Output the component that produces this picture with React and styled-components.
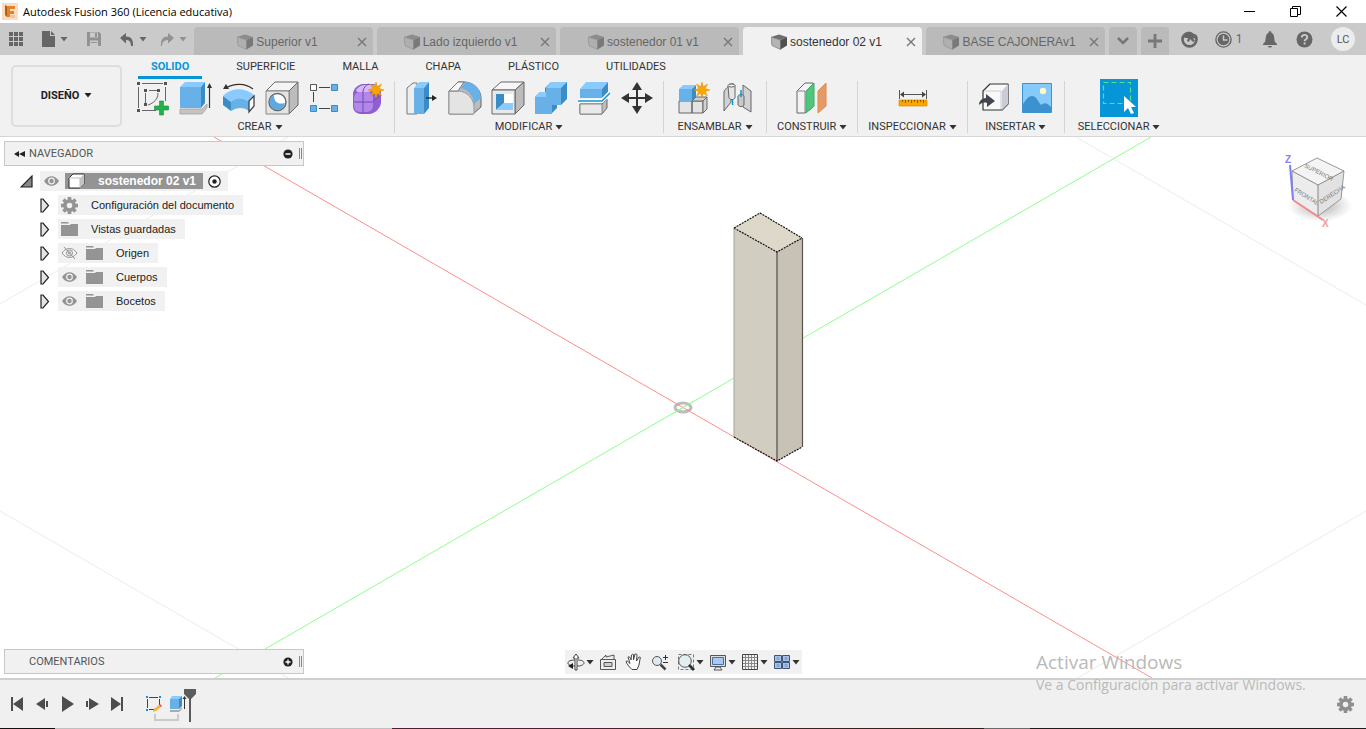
import React from "react";
import styled, {createGlobalStyle} from "styled-components";

const uiFont = `Roboto, "Liberation Sans", Arial, sans-serif`;
const labelFont = `"Liberation Sans", Arial, sans-serif`;
const systemFont = `"Open Sans", "Noto Sans", sans-serif`;

const panelColor = "#f1f1f1";
const barColor = "#cacaca";
const accent = "#0696d7";
const iconGrey = "#666666";

const GlobalStyle = createGlobalStyle`
  *, *::before, *::after { box-sizing: border-box; }
  body { margin: 0; background: white; font-family: ${uiFont}; font-size: 11px; color: #222; }
  button { border: 0; padding: 0; margin: 0; background: none; font: inherit; color: inherit; cursor: pointer; }
  ul { list-style: none; margin: 0; padding: 0; }
  svg { display: block; flex: none; }
`;

const Page = styled.div`
  display: flex;
  flex-direction: column;
  min-height: 100vh;
  position: relative;
  overflow: hidden;
`;

/* ---- title bar ---- */

const TitleBar = styled.header`
  display: flex;
  align-items: center;
  height: 23px;
  padding: 0 2px 0 2px;
  background: white;
  color: black;
`;

const WindowTitle = styled.h1`
  flex: 1;
  margin: 0 0 0 5px;
  font-family: ${systemFont};
  font-size: 11px;
  line-height: 20px;
  font-weight: normal;
`;

const WindowButton = styled.button`
  display: flex;
  align-items: center;
  justify-content: center;
  width: 46px;
  height: 20px;
`;

/* ---- quick access bar and document tabs ---- */

const QuickBar = styled.div`
  display: flex;
  height: 32px;
  background: ${barColor};
`;

const QuickTools = styled.div`
  display: grid;
  grid-template-columns: 32px 46px 33px 40px 35px;
  align-items: center;
  padding-left: 8px;
  color: ${iconGrey};
`;

const QuickButton = styled.button`
  display: flex;
  align-items: center;
  gap: 4px;
  opacity: ${props => props.$dim ? 0.55 : 1};
`;

const DocTabs = styled.div`
  display: flex;
  flex: 1;
  gap: 4px;
  padding-top: 4px;
  min-width: 0;
`;

const DocTab = styled.div`
  display: flex;
  flex: 1 1 0;
  align-items: center;
  min-width: 0;
  padding: 2px 5px 0;
  border-radius: 4px 4px 0 0;
  background: ${props => props.$active ? panelColor : "#bababa"};
  color: ${props => props.$active ? "#333" : "#666"};
  font-family: ${labelFont};
  font-size: 12px;
`;

const DocTabLabel = styled.button`
  display: flex;
  flex: 1;
  align-items: center;
  justify-content: center;
  gap: 3px;
  white-space: nowrap;
`;

const DocTabClose = styled.button`
  display: flex;
  justify-content: center;
  width: 12px;
  color: #777;
`;

const TabAction = styled.button`
  display: flex;
  align-items: center;
  justify-content: center;
  width: 28px;
  border-radius: 4px 4px 0 0;
  background: #bababa;
  color: #777;
`;

const AccountTools = styled.div`
  display: grid;
  grid-template-columns: 32px 47px 36px 32px 46px;
  align-items: center;
  justify-items: center;
  margin-left: 4px;
  color: ${iconGrey};
  font-size: 12px;
`;

const Avatar = styled.button`
  width: 24px;
  height: 24px;
  border-radius: 50%;
  background: #ececec;
  color: #555;
  font-size: 11px;
`;

/* ---- ribbon ---- */

const Ribbon = styled.div`
  display: flex;
  height: 82px;
  background: ${panelColor};
  border-bottom: 1px solid #d6d6d6;
`;

const Workspace = styled.button`
  display: flex;
  align-items: center;
  justify-content: center;
  gap: 5px;
  width: 111px;
  height: 62px;
  margin: 10px 4px 0 11px;
  padding-bottom: 2px;
  border: 2px solid #dedede;
  border-radius: 5px;
  font-weight: bold;
`;

const RibbonTabs = styled.div`
  display: flex;
  gap: 21px;
  height: 24px;
  padding-left: 12px;
`;

const RibbonTab = styled.button`
  height: 24px;
  padding: 2px 13px 0;
  line-height: 19px;
  color: ${props => props.$active ? accent : "#333"};
  font-weight: ${props => props.$active ? "bold" : "normal"};
  border-bottom: 3px solid ${props => props.$active ? accent : "transparent"};
`;

const RibbonGroups = styled.div`
  display: flex;
`;

const Group = styled.section`
  display: flex;
  flex-direction: column;
  align-items: center;
  padding: 0 ${props => props.$roomy ? 8 : 5}px;
`;

const GroupIcons = styled.div`
  display: flex;
`;

const IconCell = styled.button`
  display: flex;
  align-items: center;
  justify-content: center;
  width: 43px;
  height: 38px;
`;

const GroupLabel = styled.button`
  display: flex;
  align-items: center;
  gap: 3px;
  padding: 0 5px;
  line-height: 20px;
  color: #333;
`;

const Divider = styled.div`
  width: 1px;
  height: 52px;
  margin-top: 2px;
  background: #d4d4d4;
`;

/* ---- canvas ---- */

const Canvas = styled.main`
  display: flex;
  flex: 1;
  flex-direction: column;
  justify-content: space-between;
  position: relative;
  padding: 4px;
`;

const SceneSvg = styled.svg`
  position: absolute;
  inset: 0;
  width: 100%;
  height: 100%;
`;

const CanvasTop = styled.div`
  display: flex;
  justify-content: space-between;
  align-items: flex-start;
  position: relative;
`;

const CubeSvg = styled.svg`
  margin: 9px 6px 0 0;
`;

const Browser = styled.aside`
  width: 300px;
`;

const PanelHead = styled.div`
  display: flex;
  align-items: center;
  width: 300px;
  height: 25px;
  padding: 0 1px 0 9px;
  border: 1px solid #c8c8c8;
  background: ${panelColor};
  color: #555;
`;

const PanelName = styled.span`
  flex: 1;
  padding-left: ${props => props.$indent}px;
`;

const PanelToggle = styled.button`
  margin-right: 6px;
`;

const Grip = styled.span`
  width: 3px;
  height: 11px;
  border: solid #888;
  border-width: 0 1px;
`;

const Tree = styled.ul`
  padding-top: 3px;
  font-family: ${labelFont};
`;

const TreeRow = styled.li`
  display: flex;
  align-items: center;
  height: 24px;
  padding-left: ${props => props.$root ? 16 : 34}px;
`;

const Expander = styled.button`
  display: flex;
  width: 20px;
`;

const NodeChip = styled.div`
  display: flex;
  align-items: center;
  height: 20px;
  padding: 0 9px 0 3px;
  gap: 8px;
  background: ${panelColor};
`;

const NodeName = styled.span`
  padding-left: 5px;
  white-space: nowrap;
`;

const RootChip = styled(NodeChip)`
  gap: 5px;
  padding-right: 7px;
`;

const RootName = styled.span`
  display: flex;
  align-items: center;
  gap: 13px;
  height: 16px;
  padding: 0 7px 0 3px;
  background: #949494;
  color: white;
  font-weight: bold;
  font-size: 12px;
  white-space: nowrap;
`;

const CanvasFooter = styled.div`
  display: grid;
  grid-template-columns: 1fr auto 1fr;
  align-items: center;
  position: relative;
`;

const ViewTools = styled.div`
  display: flex;
  align-items: center;
  gap: 5px;
  height: 24px;
  padding: 0 2px;
  background: ${panelColor};
  color: #333;
`;

const ViewTool = styled.button`
  display: flex;
  align-items: center;
  gap: 1px;
  padding-right: ${props => props.$menu ? 0 : 3}px;
`;

/* ---- timeline ---- */

const Timeline = styled.footer`
  display: flex;
  align-items: center;
  height: 50px;
  padding: 0 12px 0 4px;
  border-top: 2px solid #cfcfcf;
  background: #f0f0f0;
  color: #4d4d4d;
`;

const PlayButton = styled.button`
  display: flex;
  align-items: center;
  justify-content: center;
  width: 25px;
  height: 24px;
`;

const Track = styled.div`
  display: flex;
  flex: 1;
  gap: 4px;
  position: relative;
  margin-left: 15px;
`;

const Feature = styled.button`
  width: 20px;
  height: 20px;
`;

const Bracket = styled.span`
  position: absolute;
  left: 10px;
  top: 20px;
  width: 25px;
  height: 7px;
  border: 2px solid #cacaca;
  border-top: 0;
`;

const Marker = styled.svg`
  position: absolute;
  left: 40px;
  top: -5px;
`;

const DesktopEdge = styled.div`
  height: 1px;
  background: linear-gradient(to right, #111 0 4%, #c0c0c0 4% 28.7%, #4a1f33 28.7%, #4a1f33 45%, #3a2a1e 52%, #2a2020 72%, #6a6a6a 72% 75.4%, #1c1c1c 75.4%);
`;

const Watermark = styled.div`
  position: absolute;
  right: 55px;
  bottom: 33px;
  width: 275px;
  color: #b9b9b9;
  font-family: ${systemFont};
  font-size: 14px;
  line-height: 22px;
  white-space: nowrap;
  pointer-events: none;
`;

const WatermarkTitle = styled.div`
  font-size: 19px;
  line-height: 24px;
`;

/* ---- small icons ---- */

const Caret = () => <svg width="8" height="6" viewBox="0 0 8 6"><path d="M.5 1h7L4 5.500z" fill="currentColor"/></svg>;

const CloseIcon = () => (
  <svg width="10" height="10" viewBox="0 0 10 10"><path d="M1 1l8 8M9 1l-8 8" stroke="currentColor" strokeWidth="1.4"/></svg>
);

const DocCube = ({active}) => (
  <svg width="16" height="16" viewBox="0 0 16 16" opacity={active ? 1 : 0.6}>
    <path d="M0 3l8-2.500L16 3 9.500 6z" fill="#6e6e6e"/>
    <path d="M0 3l9.500 3v9.500L1 11.500z" fill={active ? "#b4b4b4" : "#a8a8a8"} stroke="#777" strokeWidth=".7"/>
    <path d="M16 3L9.500 6v9.500l6.500-4z" fill="#4f4f4f"/>
  </svg>
);

const FusionLogo = () => (
  <svg width="16" height="17" viewBox="0 0 16 17">
    <rect width="16" height="17" fill="#fbdcc0"/>
    <path d="M5 3h8v3H8v2h4v3H8v3H5z" fill="#e0842f"/>
    <path d="M3 2l2 1v11l-2-2z" fill="#b5600f"/>
    <path d="M8 12h5v3H9z" fill="#f3c298"/>
  </svg>
);

const quickIcons = {
  grid: <g fill="currentColor">{[1, 6, 11].map(y => [1, 6, 11].map(x => <rect key={x + "-" + y} x={x} y={y} width="4" height="4"/>))}</g>,
  file: <path d="M2 0h8v5h5v11H2zM11 0l4 4h-4z" fill="currentColor"/>,
  save: <g><path d="M1 1h12l2 2v12H1z" fill="currentColor"/><path d="M4 1.500h8v5H4zM4 9.500h8V15H4z" fill={barColor}/><path d="M9 2h2v4H9zM5 11h6v1H5z" fill="currentColor"/></g>,
  undo: <path d="M1 7l6-5v3.500c5 0 7.500 3 7 9.500h-2c0-4-1.500-6-5-6v3.500z" fill="currentColor"/>,
  redo: <path d="M15 7L9 2v3.500c-5 0-7.500 3-7 9.500h1c0-4 2.500-6 6-6v3.500z" fill="currentColor"/>,
};

const QuickIcon = ({name}) => <svg width="16" height="16" viewBox="0 0 16 16">{quickIcons[name]}</svg>;

const gearTeeth = [0, 45, 90, 135, 180, 225, 270, 315];

const GearIcon = ({size = 16, color = "#949494"}) => (
  <svg width={size} height={size} viewBox="0 0 16 16">
    <circle cx="8" cy="8" r="4.300" fill="none" stroke={color} strokeWidth="3.400"/>
    {gearTeeth.map(a => <rect key={a} x="6.300" y="0" width="3.400" height="4" fill={color} transform={`rotate(${a} 8 8)`}/>)}
  </svg>
);

const FolderIcon = () => (
  <svg width="17" height="14" viewBox="0 0 17 14"><path d="M0 0h7l1 1.500H0zM0 3h9l1-1h7v12H0z" fill="#949494"/></svg>
);

const EyeIcon = ({off}) => (
  <svg width="17" height="14" viewBox="0 0 17 14">
    {off ? (
      <g fill="none" stroke="#949494">
        <path d="M1 7c4-6 11-6 15 0-4 6-11 6-15 0z"/><circle cx="8.500" cy="7" r="3"/><circle cx="8.500" cy="7" r="1"/><path d="M3 1l11 12"/>
      </g>
    ) : (
      <g>
        <path d="M1 7c4-6.500 11-6.500 15 0-4 6.500-11 6.500-15 0z" fill="#949494"/>
        <circle cx="8.500" cy="7" r="3.400" fill={panelColor}/><circle cx="8.500" cy="7" r="2.200" fill="#949494"/>
      </g>
    )}
  </svg>
);

/* ---- ribbon icons, all on a 34px grid ---- */

const starPath = "M25 1l1.300 4.800L30.500 3l-2.300 4.500L33 9l-4.800 1.500 2.300 4.500-4.200-2.800L25 17l-1.300-4.800L19.500 15l2.300-4.500L17 9l4.800-1.500L19.500 3l4.200 2.800z";

const ribbonIcons = {
  sketch: (
    <g fill="none" stroke="#666">
      <path d="M2.500 6v21M6 2.500h21M29.500 6v14M6 29.500h14" />
      <path d="M9.500 12v10M13 9.500h8M22 12c0 6-4 10-10 12"/>
      <path d="M1 1h3v3H1zM28 1h3v3h-3zM1 28h3v3H1zM8 8h3v3H8zM21 8h3v3h-3zM8 22h3v3H8z" fill="#555" stroke="none"/>
      <path d="M23.500 20h4v5h5v4h-5v5h-4v-5h-5v-4h5z" fill="#23b14d" stroke="#179239" strokeWidth=".6"/>
    </g>
  ),
  extrude: (
    <g>
      <path d="M1 28h22l5-5v4l-5 6H1z" fill="#c4c4c4" stroke="#999" strokeWidth=".7"/>
      <path d="M1 6h21v21H1z" fill="#67b1e8"/><path d="M1 6l5-5h20l-4 5z" fill="#8acbff"/><path d="M22 6l4-5v21l-4 5z" fill="#3a8cc6"/>
      <path d="M30.500 27V5" stroke="#333" strokeWidth="1.200"/><path d="M28 7l2.500-5L33 7z" fill="#333"/>
    </g>
  ),
  revolve: (
    <g>
      <path d="M1 15c8-9 23-9 32 0l-6 6c-6-5-13-5-18 0z" fill="#8acbff"/>
      <path d="M9 21c5-5 12-5 18 0v9c-5-4-12-4-18 0z" fill="#67b1e8"/>
      <path d="M1 15l8 6v9l-8-6z" fill="#3a8cc6"/>
      <path d="M27 20l5-5v10l-5 6z" fill="white" stroke="#444" strokeWidth="1.300"/>
      <path d="M4 7c8-5 19-5 27 1" fill="none" stroke="#333" strokeWidth="1.200"/><path d="M1 8l3-5 3 5z" fill="#333"/>
    </g>
  ),
  hole: (
    <g stroke="#666" strokeLinejoin="round">
      <path d="M1 10l9-9h23l-9 9z" fill="#f4f4f4"/><path d="M24 10l9-9v23l-9 9z" fill="#bcbcbc"/><path d="M1 10h23v23H1z" fill="#e4e4e4" stroke="#888"/>
      <circle cx="12.500" cy="21" r="8.500" fill="white" strokeWidth="1.400"/>
      <path d="M9 14c0 7 4 10 11 8-1 5-5 7-8 7-9-1-9-12-3-15z" fill="#5ea9e0" stroke="none"/>
    </g>
  ),
  pattern: (
    <g>
      <path d="M11 6.500h11M5.500 11v10M11 27.500h11" stroke="#444" fill="none"/>
      <path d="M2.500 3.500h6v6h-6z" fill="white" stroke="#555"/>
      <path d="M23.500 3.500h6v6h-6zM2.500 24.500h6v6h-6zM23.500 24.500h6v6h-6z" fill="#67b1e8" stroke="#3a8cc6"/>
    </g>
  ),
  form: (
    <g>
      <path d="M2 12c1-5 5-8 9-9h12c5 2 7 5 7 10v9c-1 6-6 10-11 11H9c-5-1-7-4-7-8z" fill="#8f5fd0"/>
      <path d="M5 9c3-4 6-5 10-5h9c-2 5-3 7-7 7H6z" fill="#d5b8fa"/>
      <rect x="3" y="11" width="19" height="20" rx="6" fill="#b187ea"/>
      <path d="M12 10v22M3 21h19M22 20l8-6M12 10c1-4 3-6 6-7" fill="none" stroke="#7448b4"/>
      <path d={starPath} fill="#f9a602" stroke="#e08c00" strokeWidth=".5"/>
    </g>
  ),
  pressPull: (
    <g>
      <path d="M2 7l6-5h4v31H2z" fill="#eee" stroke="#777"/>
      <path d="M9 7h10v26H9z" fill="#67b1e8"/><path d="M9 7l5-6h10l-5 6z" fill="#8acbff"/><path d="M19 7l5-6v26l-5 6z" fill="#3a8cc6"/>
      <path d="M21 17h8" stroke="#222" strokeWidth="1.300"/><path d="M27 14l5 3-5 3z" fill="#222"/>
    </g>
  ),
  fillet: (
    <g strokeLinejoin="round">
      <path d="M1 10l9-9h6c10 0 17 8 17 16v9l-8 7H1z" fill="#bcbcbc" stroke="#666"/>
      <path d="M1 10h9c9 0 16 8 16 16v7H1z" fill="#e4e4e4" stroke="#999"/>
      <path d="M1 10l9-9h6l-6 9z" fill="#f7f7f7" stroke="#777"/>
      <path d="M13 7l5-6c9 0 15 8 15 16l-7 6C26 15 20 9 13 7z" fill="#67b1e8"/>
    </g>
  ),
  shell: (
    <g stroke="#666" strokeLinejoin="round">
      <path d="M1 9l9-8h23l-9 8z" fill="#f7f7f7"/><path d="M24 9l9-8v23l-9 9z" fill="#bcbcbc"/><path d="M1 9h23v24H1z" fill="#e9e9e9"/>
      <path d="M5 13h17v16H5z" fill="white" stroke="none"/><path d="M5 13h8v9l-8 7z" fill="#3a8cc6" stroke="none"/><path d="M5 29l8-7h9v7z" fill="#8acbff" stroke="none"/>
    </g>
  ),
  combine: (
    <g>
      <path d="M1 16l5-5h5V7l6-6h16v17l-6 6h-4v3l-6 6H1z" fill="#3a8cc6"/>
      <path d="M1 16h11V7h15v17h-9v9H1z" fill="#67b1e8"/><path d="M1 16l5-5h6v5zM12 7l5-6h16l-6 6z" fill="#8acbff"/>
    </g>
  ),
  split: (
    <g>
      <path d="M3 23h22l5-5v9l-5 6H3z" fill="#bcbcbc" stroke="#666"/><path d="M3 23h22v10H3z" fill="#e9e9e9" stroke="#888"/>
      <path d="M3 8h22v9H3z" fill="#67b1e8"/><path d="M3 8l6-7h22l-6 7z" fill="#8acbff"/><path d="M25 8l6-7v10l-6 6z" fill="#3a8cc6"/>
      <path d="M1 20h24l8-8" fill="none" stroke="white" strokeWidth="4"/><path d="M1 20h24l8-8" fill="none" stroke="#0696d7" strokeWidth="1.500"/>
    </g>
  ),
  move: (
    <g fill="#333">
      <path d="M16 7h2v20h-2z"/><path d="M7 16h20v2H7z"/>
      <path d="M17 1l5 8H12zM17 33l5-8H12zM1 17l8-5v10zM33 17l-8-5v10z"/>
    </g>
  ),
  component: (
    <g strokeLinejoin="round">
      <path d="M2 20h13v12H2zM15 20h11v12H15z" fill="#e4e4e4" stroke="#666"/>
      <path d="M15 20l4-4h11l-4 4zM26 20l4-4v12l-4 4z" fill="#d2d2d2" stroke="#666"/>
      <path d="M2 8h13v12H2z" fill="#67b1e8"/><path d="M2 8l4-4h13l-4 4z" fill="#8acbff"/><path d="M15 8l4-4v12l-4 4z" fill="#3a8cc6"/>
      <path d={starPath} fill="#f9a602" stroke="#e08c00" strokeWidth=".5"/>
    </g>
  ),
  joint: (
    <g stroke="#666" strokeLinejoin="round">
      <path d="M4 11c1-3 4-6 7-6v16l-7 9z" fill="#d2d2d2"/><path d="M8 5c1-3 7-3 7 0v12c-1 2-5 2-6 0z" fill="#e6e6e6"/><ellipse cx="11.500" cy="4.500" rx="3.500" ry="1.500" fill="#f4f4f4"/>
      <path d="M23 4l8 6v21l-8-5z" fill="#d2d2d2"/><path d="M18 15c1-2 5-2 6 0v9c-1 2-5 2-6 0z" fill="#c8c8c8"/>
      <path d="M12.500 19v5M21 9v7" stroke="#0696d7" strokeWidth="1.500"/>
    </g>
  ),
  plane: (
    <g strokeLinejoin="round">
      <path d="M2 10l8-8h8v24l-8 6H2z" fill="#f3f3f3" stroke="#666"/><path d="M2 10h8v22" fill="none" stroke="#888"/>
      <path d="M11 10l8-8v23l-8 7z" fill="#50c57c" stroke="#3dab68"/><path d="M23 10l8-8v23l-8 7z" fill="#e69a65" stroke="#d88a52"/>
    </g>
  ),
  measure: (
    <g>
      <path d="M3.500 9v9M30.500 9v9M5 13.500h23" stroke="#555" fill="none"/><path d="M4 13.500l4-3v6zM30 13.500l-4-3v6z" fill="#444"/>
      <path d="M3 19h28v6H3z" fill="#f9a602" stroke="#dc8b00" strokeWidth=".7"/>
      <path d="M6.500 19v2M9.500 19v3M12.500 19v2M15.500 19v3M18.500 19v2M21.500 19v3M24.500 19v2M27.500 19v3" stroke="#8a5a00"/>
    </g>
  ),
  insert: (
    <g strokeLinejoin="round">
      <path d="M6 10l7-7h18v20l-6 6H6z" fill="#f8f8f8" stroke="#333" strokeWidth="1.200"/>
      <path d="M25 10l6-7v20l-6 6z" fill="#c9ccd4"/><path d="M7 10h17v18" fill="none" stroke="#ccc"/>
      <path d="M2 24c0-4 3-7 7-7v-4l9 7-8 6v-4c-3-1-6 0-8 2z" fill="#42454d"/>
    </g>
  ),
  image: (
    <g>
      <path d="M2.500 2.500h29v29h-29z" fill="#86c9fb" stroke="#3c91cf"/>
      <path d="M3 23c3-4 5-8 9-8s6 5 9 9c4-3 6-2 10 2v5H3z" fill="#3c91cf"/><circle cx="23" cy="10" r="3.200" fill="#fffbc2"/>
    </g>
  ),
  select: (
    <g>
      <path d="M-2-2h38v38H-2z" fill={accent}/>
      <path d="M1.500 1.500h27v21h-27z" fill="none" stroke="#5be08a" strokeWidth="1.200" strokeDasharray="5 3"/>
      <path d="M22 15v16l4-4 3 6 3-1-3-6h5z" fill="white"/>
    </g>
  ),
};

const RibbonIcon = ({name}) => (
  <svg width="34" height="34" viewBox="0 0 34 34" overflow="visible">{ribbonIcons[name]}</svg>
);

/* ---- view bar icons, 18px grid ---- */

const viewIcons = {
  orbit: (
    <g fill="none" stroke="#444">
      <path d="M8 7c-4 0-7 1-7 3s3 3 7 3h3c4 0 6-2 6-3 0-2-3-3-6-3"/>
      <path d="M8 17V5H6l3-4 3 4h-2v12z" fill="white"/><path d="M6 10l-5 3 5 3z" fill="#222" stroke="none"/>
    </g>
  ),
  look: (
    <g stroke="#555" fill="#eee"><path d="M3 6l4-4v2l8-2v4"/><path d="M1.500 6.500h15v10h-15z"/><path d="M5 9.500h8v4H5z" fill="#c5cde2"/></g>
  ),
  hand: (
    <path d="M7 16.500c-2-2-5-5-6-8 1-1 2 0 4 2L3 4c1-1 2 0 3 3L6.500 2c1-1 2-1 2 0v5l1.500-6c1 0 2 0 2 1l-.5 6 2.500-4c1 0 2 0 1 2l-1 6-2 4.500z" fill="white" stroke="#444" strokeLinejoin="round"/>
  ),
  zoom: (
    <g><circle cx="6" cy="8" r="4.500" fill="#dce9f2" stroke="#555"/><path d="M9.500 11.500l5 5" stroke="#444" strokeWidth="2.500"/><path d="M12 4.500h5M14.500 2v5M12 9.500h5" stroke="#333"/></g>
  ),
  window: (
    <g><path d="M1.500 1.500h15v15h-15z" fill="none" stroke="#777" strokeDasharray="3 2"/><circle cx="8" cy="8" r="6.300" fill="#e3eef0" stroke="#555"/><path d="M12 12l5 5" stroke="#333" strokeWidth="2.800"/></g>
  ),
  display: (
    <g stroke="#555"><path d="M1.500 2.500h15v11h-15z" fill="#ddd"/><path d="M3.500 4.500h11v7h-11z" fill="#a9c9f5" stroke="#4a6fa5"/><path d="M7 14h4l2 3H5z" fill="#eee"/></g>
  ),
  grid: (
    <g stroke="#888" fill="none"><path d="M4.500 1v16M7.500 1v16M10.500 1v16M13.500 1v16M1 4.500h16M1 7.500h16M1 10.500h16M1 13.500h16"/><path d="M1.500 1.500h15v15h-15z" stroke="#444"/></g>
  ),
  views: (
    <g fill="#a9c4ea" stroke="#3f5678"><path d="M1.500 2.500h7v6h-7zM9.500 2.500h7v6h-7zM1.500 9.500h7v6h-7zM9.500 9.500h7v6h-7z"/><path d="M4 4.500h2v2H4zM12 4.500h2v2h-2zM4 11.500h2v2H4zM12 11.500h2v2h-2z" stroke="#7f9dcb"/></g>
  ),
};

const playIcons = {
  "Inicio": "M2 1h2v14H2zM14 1v14L4 8z",
  "Anterior": "M2 8l9-6v12zM12 5h2v6h-2z",
  "Reproducir": "M3 0l12 8-12 8z",
  "Siguiente": "M2 5h2v6H2zM5 2l10 6-10 6z",
  "Final": "M2 1l10 7-10 7zM12 1h2v14h-2z",
};

/* ---- data ---- */

const documents = ["Superior v1", "Lado izquierdo v1", "sostenedor 01 v1", "sostenedor 02 v1", "BASE CAJONERAv1"];
const activeDocument = "sostenedor 02 v1";

const ribbonTabs = ["SOLIDO", "SUPERFICIE", "MALLA", "CHAPA", "PLÁSTICO", "UTILIDADES"];

const groups = [
  {label: "CREAR", icons: ["sketch", "extrude", "revolve", "hole", "pattern", "form"]},
  {label: "MODIFICAR", icons: ["pressPull", "fillet", "shell", "combine", "split", "move"]},
  {label: "ENSAMBLAR", icons: ["component", "joint"], roomy: true},
  {label: "CONSTRUIR", icons: ["plane"]},
  {label: "INSPECCIONAR", icons: ["measure"]},
  {label: "INSERTAR", icons: ["insert", "image"]},
  {label: "SELECCIONAR", icons: ["select"], roomy: true},
];

const nodes = [
  {name: "Configuración del documento", icon: <GearIcon size={17}/>},
  {name: "Vistas guardadas", icon: <FolderIcon/>},
  {name: "Origen", icon: <FolderIcon/>, eye: "off"},
  {name: "Cuerpos", icon: <FolderIcon/>, eye: "on"},
  {name: "Bocetos", icon: <FolderIcon/>, eye: "on"},
];

const viewTools = [
  {name: "orbit", menu: true}, {name: "look"}, {name: "hand"}, {name: "zoom"},
  {name: "window", menu: true}, {name: "display", menu: true}, {name: "grid", menu: true}, {name: "views", menu: true},
];

/* ---- scene ---- */

const Scene = () => (
  <SceneSvg viewBox="0 0 1366 541" preserveAspectRatio="xMidYMid slice" aria-hidden="true">
    <path d="M0 167L288 0M1076 0l290 168M0 374l290 168M1366 374l-290 168" stroke="#ebebeb" fill="none"/>
    <path d="M1151 0L215 541" stroke="#8dff8d"/>
    <ellipse cx="683" cy="270.500" rx="8" ry="4.500" fill="none" stroke="#bdbdbd" strokeWidth="3"/>
    <path d="M214 0l938 541" stroke="#ff8d8d"/>
    <path d="M672 277l22-13" stroke="#8dff8d"/>
    <path d="M734 91l43 24v209l-43-24z" fill="#d1cec1"/>
    <path d="M777 115l25-14v209l-25 14z" fill="#c7c2b5"/>
    <path d="M734 91l26-15 42 25-25 14z" fill="#ded8ca"/>
    <path d="M734 91v209" stroke="#a5a39a"/>
    <path d="M777 115v209" stroke="#66645c" strokeWidth="1.500"/>
    <path d="M802.500 101v209" stroke="#55534c" strokeWidth="1.200"/>
    <path d="M734 91l26-15 42 25M734 91l43 24 25-14M734 300l43 24 25-14" fill="none" stroke="#111" strokeWidth="1.200" strokeDasharray="2 1"/>
  </SceneSvg>
);

const ViewCube = () => (
  <CubeSvg width="76" height="90" viewBox="0 0 76 90" fontFamily="Liberation Sans, sans-serif">
    <defs>
      <radialGradient id="cubeShadow"><stop offset="0" stopColor="#888" stopOpacity=".7"/><stop offset="1" stopColor="#999" stopOpacity="0"/></radialGradient>
    </defs>
    <ellipse cx="40" cy="56" rx="32" ry="16" fill="url(#cubeShadow)"/>
    <path d="M37 8l27 13-26 14-26-14z" fill="#f4f4f4"/>
    <path d="M12 21l26 14v31L13 50z" fill="#ececec"/>
    <path d="M64 21L38 35v31l23-17z" fill="#e2e2e2"/>
    <path d="M37 8l27 13-3 28-23 17-25-16-1-29z" fill="none" stroke="#999"/>
    <path d="M12 21l26 14 26-14M38 35v31" fill="none" stroke="#888"/>
    <path d="M10 15l3 35" stroke="#7d7df5" strokeWidth="2"/>
    <path d="M13 50l30 20" stroke="#f58a8a" strokeWidth="2"/>
    <text x="5" y="13" fontSize="10" fontWeight="bold" fill="#8585f0">Z</text>
    <text x="42" y="77" fontSize="10" fontWeight="bold" fill="#f59a9a">X</text>
    <text transform="translate(14 41) rotate(32)" fontSize="6" fill="#777">FRONTAL</text>
    <text transform="translate(41 54) rotate(-33)" fontSize="6" fill="#777">DERECHA</text>
    <text transform="translate(24 17) rotate(27)" fontSize="6" fill="#777">SUPERIOR</text>
  </CubeSvg>
);

const BrowserPanel = () => (
  <Browser>
    <PanelHead>
      <svg width="11" height="8" viewBox="0 0 11 8"><path d="M5 1v6L0 4zM11 1v6L5 4z" fill="#222"/></svg>
      <PanelName $indent={4}>NAVEGADOR</PanelName>
      <PanelToggle aria-label="Contraer navegador">
        <svg width="10" height="10" viewBox="0 0 10 10"><circle cx="5" cy="5" r="4.600" fill="#222"/><path d="M2.500 5h5" stroke="white" strokeWidth="1.500"/></svg>
      </PanelToggle>
      <Grip/>
    </PanelHead>
    <Tree>
      <TreeRow $root>
        <Expander aria-label="Contraer">
          <svg width="13" height="13" viewBox="0 0 13 13"><path d="M12 1v11H1z" fill="#888" stroke="#222" strokeWidth="1.200"/></svg>
        </Expander>
        <RootChip>
          <EyeIcon/>
          <RootName>
            <svg width="17" height="16" viewBox="0 0 17 16">
              <path d="M1 5l4-4h11v10l-4 4H1z" fill="white" stroke="#333"/><path d="M12 5l4-4v10l-4 4z" fill="#c4c4c4"/><path d="M1 5h11v10" fill="none" stroke="#bbb"/>
            </svg>
            sostenedor 02 v1
          </RootName>
          <svg width="13" height="13" viewBox="0 0 13 13"><circle cx="6.500" cy="6.500" r="5.700" fill="white" stroke="#222" strokeWidth="1.200"/><circle cx="6.500" cy="6.500" r="2.200" fill="#222"/></svg>
        </RootChip>
      </TreeRow>
      {nodes.map(node => (
        <TreeRow key={node.name}>
          <Expander aria-label={"Expandir " + node.name}>
            <svg width="13" height="15" viewBox="0 0 13 15"><path d="M3 1h2l5.500 6.500L5 14H3z" fill="#e4e4e4" stroke="#222" strokeWidth="1.200"/></svg>
          </Expander>
          <NodeChip>
            {node.eye && <EyeIcon off={node.eye === "off"}/>}
            {node.icon}
            <NodeName>{node.name}</NodeName>
          </NodeChip>
        </TreeRow>
      ))}
    </Tree>
  </Browser>
);

export default function App() {
  return (
    <Page>
      <GlobalStyle/>
      <TitleBar>
        <FusionLogo/>
        <WindowTitle>Autodesk Fusion 360 (Licencia educativa)</WindowTitle>
        <WindowButton aria-label="Minimizar"><svg width="11" height="11" viewBox="0 0 11 11"><path d="M0 5.500h11" stroke="black"/></svg></WindowButton>
        <WindowButton aria-label="Restaurar"><svg width="11" height="11" viewBox="0 0 11 11"><path d="M.5 2.500h7v8h-7zM2.500 2.500v-2h8v8h-3" fill="none" stroke="black"/></svg></WindowButton>
        <WindowButton aria-label="Cerrar"><svg width="11" height="11" viewBox="0 0 11 11"><path d="M.5.5l10 10M10.500.5l-10 10" stroke="black" strokeWidth="1.200"/></svg></WindowButton>
      </TitleBar>

      <QuickBar>
        <QuickTools>
          <QuickButton aria-label="Panel de datos"><QuickIcon name="grid"/></QuickButton>
          <QuickButton aria-label="Archivo"><QuickIcon name="file"/><Caret/></QuickButton>
          <QuickButton aria-label="Guardar" $dim><QuickIcon name="save"/></QuickButton>
          <QuickButton aria-label="Deshacer"><QuickIcon name="undo"/><Caret/></QuickButton>
          <QuickButton aria-label="Rehacer" $dim><QuickIcon name="redo"/><Caret/></QuickButton>
        </QuickTools>
        <DocTabs>
          {documents.map(name => (
            <DocTab key={name} $active={name === activeDocument}>
              <DocTabLabel><DocCube active={name === activeDocument}/>{name}</DocTabLabel>
              <DocTabClose aria-label={"Cerrar " + name}><CloseIcon/></DocTabClose>
            </DocTab>
          ))}
          <TabAction aria-label="Lista de documentos"><svg width="12" height="8" viewBox="0 0 12 8"><path d="M1 1l5 5 5-5" fill="none" stroke="currentColor" strokeWidth="2.500"/></svg></TabAction>
          <TabAction aria-label="Nuevo diseño"><svg width="14" height="14" viewBox="0 0 14 14"><path d="M7 0v14M0 7h14" stroke="currentColor" strokeWidth="2.800"/></svg></TabAction>
        </DocTabs>
        <AccountTools>
          <QuickButton aria-label="Extensiones">
            <svg width="17" height="17" viewBox="0 0 17 17">
              <path d="M3 4a7 7 0 1 0 11 0" fill="none" stroke="currentColor" strokeWidth="2.600"/>
              <path d="M2 5c0-3 4-5 8-4l5 3-2 1 3 1-1 2-3-1 2 3-2 1-3-3-1 3-2-1 1-3-3 0z" fill="currentColor"/>
            </svg>
          </QuickButton>
          <QuickButton aria-label="Estado del trabajo">
            <svg width="17" height="17" viewBox="0 0 17 17"><circle cx="8.500" cy="8.500" r="7.600" fill="none" stroke="currentColor" strokeWidth="1.400"/><circle cx="8.500" cy="8.500" r="5.800" fill="currentColor"/><path d="M8.500 4.500v4.500h4" fill="none" stroke={barColor} strokeWidth="1.500"/></svg>
            1
          </QuickButton>
          <QuickButton aria-label="Notificaciones">
            <svg width="16" height="17" viewBox="0 0 16 17"><path d="M8 0c1 0 1.500 1 1.500 2C13 3 12 9 13 11l2 2v1H1v-1l2-2c1-2 0-8 3.500-9C6.500 1 7 0 8 0zM6 15h4c0 2-4 2-4 0z" fill="currentColor"/></svg>
          </QuickButton>
          <QuickButton aria-label="Ayuda">
            <svg width="17" height="17" viewBox="0 0 17 17"><circle cx="8.500" cy="8.500" r="8" fill="currentColor"/><path d="M5.800 6.500c0-3.500 5.500-3.500 5.500-.3 0 2-2.700 2-2.700 4M8.600 11.500v2" fill="none" stroke={barColor} strokeWidth="1.900"/></svg>
          </QuickButton>
          <Avatar>LC</Avatar>
        </AccountTools>
      </QuickBar>

      <Ribbon>
        <Workspace>DISEÑO <Caret/></Workspace>
        <div>
          <RibbonTabs>
            {ribbonTabs.map((name, i) => <RibbonTab key={name} $active={i === 0}>{name}</RibbonTab>)}
          </RibbonTabs>
          <RibbonGroups>
            {groups.map((group, i) => (
              <React.Fragment key={group.label}>
                {i > 0 && <Divider/>}
                <Group $roomy={group.roomy}>
                  <GroupIcons>
                    {group.icons.map(name => <IconCell key={name} aria-label={name}><RibbonIcon name={name}/></IconCell>)}
                  </GroupIcons>
                  <GroupLabel>{group.label}<Caret/></GroupLabel>
                </Group>
              </React.Fragment>
            ))}
          </RibbonGroups>
        </div>
      </Ribbon>

      <Canvas>
        <Scene/>
        <CanvasTop>
          <BrowserPanel/>
          <ViewCube/>
        </CanvasTop>
        <CanvasFooter>
          <PanelHead>
            <PanelName $indent={15}>COMENTARIOS</PanelName>
            <PanelToggle aria-label="Expandir comentarios">
              <svg width="10" height="10" viewBox="0 0 10 10"><circle cx="5" cy="5" r="4.600" fill="#222"/><path d="M2.500 5h5M5 2.500v5" stroke="white" strokeWidth="1.300"/></svg>
            </PanelToggle>
            <Grip/>
          </PanelHead>
          <ViewTools>
            {viewTools.map(tool => (
              <ViewTool key={tool.name} $menu={tool.menu} aria-label={tool.name}>
                <svg width="18" height="18" viewBox="0 0 18 18">{viewIcons[tool.name]}</svg>
                {tool.menu && <Caret/>}
              </ViewTool>
            ))}
          </ViewTools>
        </CanvasFooter>
      </Canvas>

      <Timeline>
        {Object.keys(playIcons).map(name => (
          <PlayButton key={name} aria-label={name}>
            <svg width="16" height="16" viewBox="0 0 16 16"><path d={playIcons[name]} fill="currentColor"/></svg>
          </PlayButton>
        ))}
        <Track>
          <Feature aria-label="Boceto">
            <svg width="20" height="20" viewBox="0 0 20 20">
              <path d="M5 3.500h9M3.500 5v9M15.500 5v6M5 15.500h5" stroke="#444"/>
              <path d="M2 2h2v2H2zM15 2h2v2h-2zM2 15h2v2H2z" fill="#0696d7"/>
              <path d="M9 18l1-3 5-4 2 2-5 4z" fill="#f7b23c"/><path d="M15 11l1-1 2 2-1 1z" fill="#e5404a"/>
            </svg>
          </Feature>
          <Feature aria-label="Extrusión">
            <svg width="20" height="20" viewBox="0 0 20 20">
              <path d="M2 16h9l3-3v2l-3 3H2z" fill="#aaa"/>
              <path d="M2 5h9v10H2z" fill="#67b1e8"/><path d="M2 5l2-3h10l-3 3z" fill="#8acbff"/><path d="M11 5l3-3v10l-3 3z" fill="#3a8cc6"/>
              <path d="M16.500 3v12" stroke="#333"/><path d="M14.500 5l2-3 2 3z" fill="#333"/>
            </svg>
          </Feature>
          <Bracket/>
          <Marker width="12" height="33" viewBox="0 0 12 33"><path d="M0 0h12v5L7 10v23H5V10L0 5z" fill="#5c5c5c"/></Marker>
        </Track>
        <button aria-label="Preferencias de la línea de tiempo"><GearIcon size={17} color="#8f8f8f"/></button>
      </Timeline>
      <DesktopEdge/>

      <Watermark>
        <WatermarkTitle>Activar Windows</WatermarkTitle>
        Ve a Configuración para activar Windows.
      </Watermark>
    </Page>
  );
}
